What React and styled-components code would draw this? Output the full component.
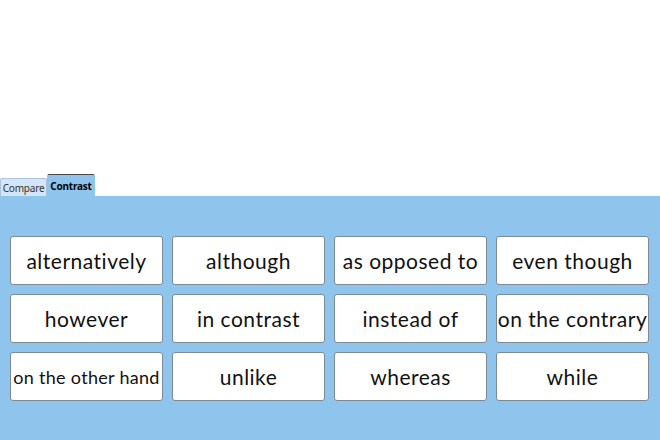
import React from "react";
import styled, { createGlobalStyle } from "styled-components";

const GlobalStyle = createGlobalStyle`
  html, body {
    margin: 0;
    padding: 0;
    background: #ffffff;
  }
  body {
    font-family: "Open Sans", "Liberation Sans", sans-serif;
  }
`;

const words = [
  "alternatively",
  "although",
  "as opposed to",
  "even though",
  "however",
  "in contrast",
  "instead of",
  "on the contrary",
  "on the other hand",
  "unlike",
  "whereas",
  "while",
];

const tabs = [
  { label: "Compare", width: 47 },
  { label: "Contrast", width: 48 },
];

function App() {
  return (
    <Page>
      <GlobalStyle />
      <Spacer />
      <TabBar>
        {tabs.map((tab) => (
          <Tab key={tab.label} width={tab.width} active={tab.label === "Contrast"}>
            {tab.label}
          </Tab>
        ))}
      </TabBar>
      <Panel>
        <Grid>
          {words.map((word) => (
            <Card key={word} small={word.length > 15}>
              {word}
            </Card>
          ))}
        </Grid>
      </Panel>
    </Page>
  );
}

export default App;

const Page = styled.div`
  width: 660px;
  height: 440px;
  display: flex;
  flex-direction: column;
  overflow: hidden;
`;

const Spacer = styled.div`
  height: 174px;
  flex-shrink: 0;
`;

const TabBar = styled.div`
  display: flex;
  align-items: flex-end;
  height: 22px;
  flex-shrink: 0;
`;

const Tab = styled.div`
  box-sizing: border-box;
  width: ${(p) => p.width}px;
  font-family: "Noto Sans", "Liberation Sans", sans-serif;
  font-size: 10px;
  letter-spacing: -0.2px;
  font-weight: ${(p) => (p.active ? 700 : 400)};
  color: ${(p) => (p.active ? "#000" : "#333")};
  background: ${(p) => (p.active ? "#8fc4ec" : "#d3e6f8")};
  border: 1px solid ${(p) => (p.active ? "#8fc4ec" : "#a9c3dc")};
  border-top: 1px solid ${(p) => (p.active ? "#4a4a4a" : "#a9c3dc")};
  border-bottom: none;
  height: ${(p) => (p.active ? "22px" : "18px")};
  padding: 0;
  display: flex;
  align-items: center;
  justify-content: center;
  border-radius: 2px 2px 0 0;
`;

const Panel = styled.div`
  flex: 1;
  background: #8fc4ec;
  padding: 40px 11px 0 10px;
`;

const Grid = styled.div`
  display: grid;
  grid-template-columns: repeat(4, 153px);
  grid-auto-rows: 49px;
  column-gap: 9px;
  row-gap: 9px;
`;

const Card = styled.div`
  box-sizing: border-box;
  background: #ffffff;
  border: 1px solid #7d8a96;
  border-radius: 3px;
  display: flex;
  align-items: center;
  justify-content: center;
  white-space: nowrap;
  overflow: hidden;
  color: #111;
  font-family: "Lato", "Open Sans", sans-serif;
  font-size: ${(p) => (p.small ? "18px" : "21px")};
  letter-spacing: ${(p) => (p.small ? "0.3px" : "0.5px")};
`;
